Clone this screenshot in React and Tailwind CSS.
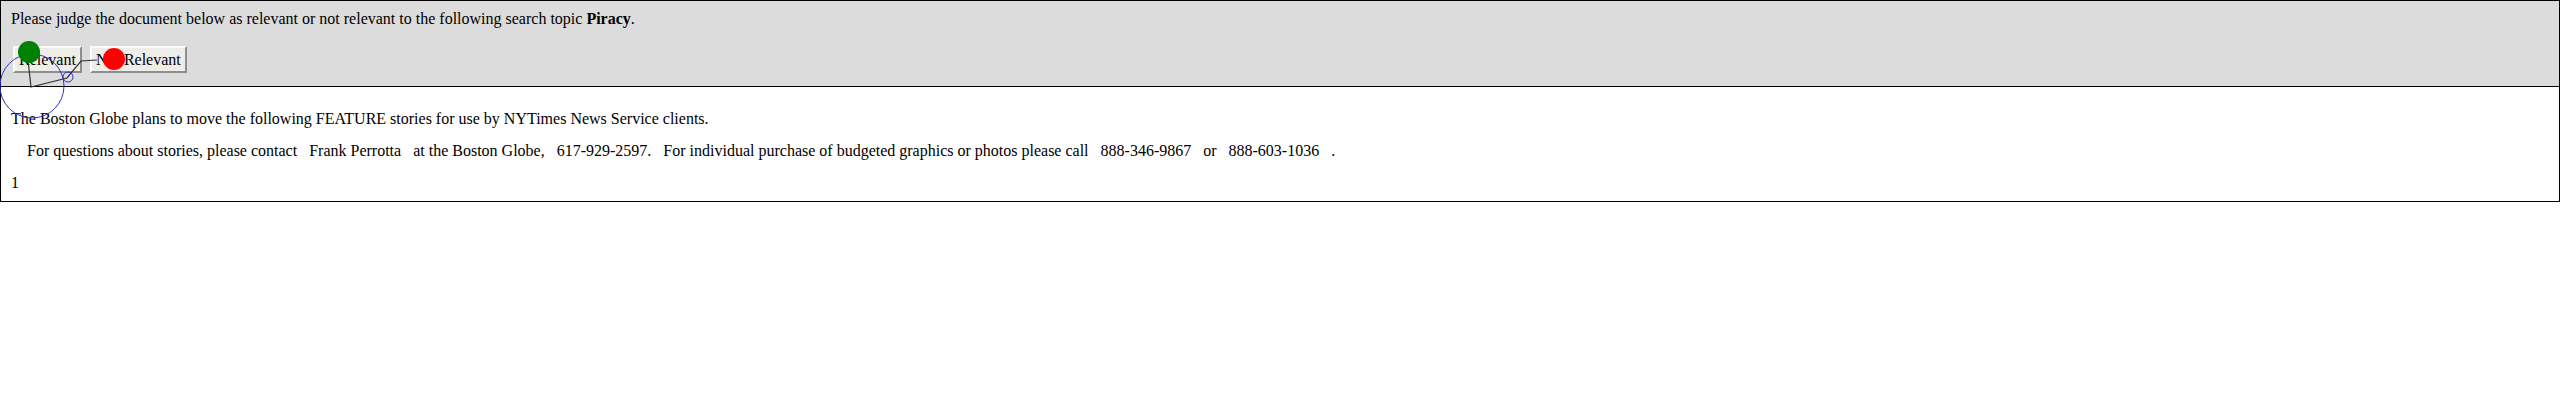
export default function App() {
  return (
    <div className="relative font-['Liberation_Serif',serif] text-[16px] leading-[18px] text-black">
      <div className="border border-black">
        {/* Judging bar */}
        <div className="bg-[#dcdcdc] border-b border-black pl-[10px] pt-[9px] pb-[13px]">
          <p>
            Please judge the document below as relevant or not relevant to the following search topic{" "}
            <b>Piracy</b>.
          </p>
          <div className="flex gap-[8px] mt-[18px] pl-[2px]">
            <button className="h-[27px] px-[4px] bg-[#efedea] border-2 border-t-[#fbfbfa] border-l-[#fbfbfa] border-b-[#8d8d8d] border-r-[#8d8d8d]">
              Relevant
            </button>
            <button className="h-[27px] px-[4px] bg-[#efedea] border-2 border-t-[#fbfbfa] border-l-[#fbfbfa] border-b-[#8d8d8d] border-r-[#8d8d8d]">
              Not Relevant
            </button>
          </div>
        </div>

        {/* Document */}
        <div className="flex flex-col gap-[14px] pl-[10px] pt-[23px] pb-[9px] whitespace-pre">
          <p>The Boston Globe plans to move the following FEATURE stories for use by NYTimes News Service clients.</p>
          <p>{"    For questions about stories, please contact   Frank Perrotta   at the Boston Globe,   617-929-2597.   For individual purchase of budgeted graphics or photos please call   888-346-9867   or   888-603-1036   ."}</p>
          <p>1</p>
        </div>
      </div>

      {/* Mouse trace overlay */}
      <svg className="absolute left-0 top-0 pointer-events-none" width="140" height="130" viewBox="0 0 140 130">
        <polyline points="28,60 31,87 67,78 81,61 97,60" fill="none" stroke="#333" strokeWidth="1.2" />
        <circle cx="32" cy="86" r="32" fill="none" stroke="#3030c8" strokeWidth="1" />
        <circle cx="68" cy="77" r="5" fill="none" stroke="#3030c8" strokeWidth="1" />
        <circle cx="29" cy="52" r="11" fill="#008000" />
        <circle cx="114" cy="59" r="11" fill="#ff0000" />
      </svg>
    </div>
  );
}
